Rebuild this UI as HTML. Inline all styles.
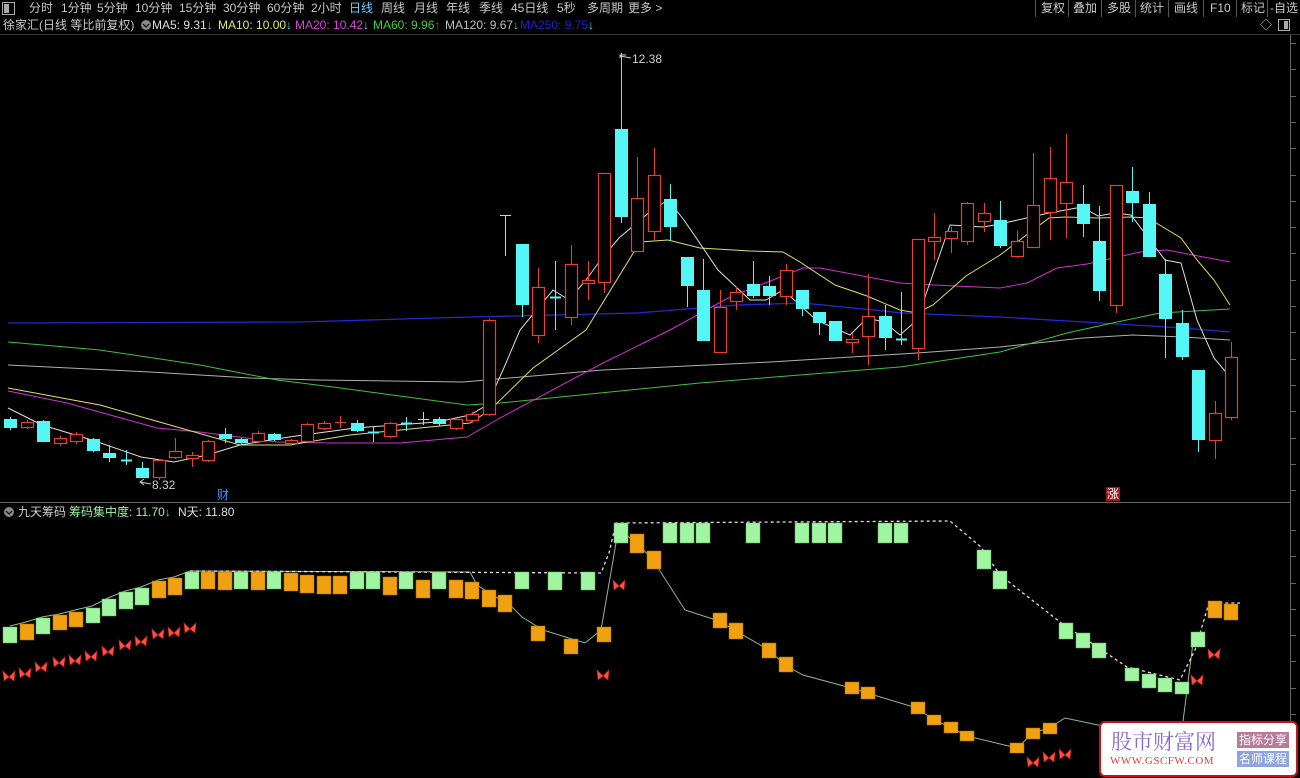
<!DOCTYPE html>
<html><head><meta charset="utf-8">
<style>
body{margin:0;background:#000;width:1300px;height:778px;overflow:hidden;position:relative;font-family:"Liberation Sans","Noto Sans CJK SC",sans-serif;font-size:12px;color:#c8c8c8}
.t{position:absolute;white-space:nowrap;line-height:17px}
svg{position:absolute;left:0;top:0}
</style></head><body>
<svg id="s" width="1300" height="778" viewBox="0 0 1300 778"></svg>

<div class="t" style="left:2px;top:0;width:13px;height:13px;top:2px;border:1px solid #aaa;box-sizing:border-box;line-height:10px"><div style="width:5px;height:9px;background:#aaa;margin:1px"></div></div>
<div class="t" style="left:29px;top:0">分时</div>
<div class="t" style="left:61px;top:0">1分钟</div>
<div class="t" style="left:97px;top:0">5分钟</div>
<div class="t" style="left:135px;top:0">10分钟</div>
<div class="t" style="left:179px;top:0">15分钟</div>
<div class="t" style="left:223px;top:0">30分钟</div>
<div class="t" style="left:267px;top:0">60分钟</div>
<div class="t" style="left:311px;top:0">2小时</div>
<div class="t" style="left:349px;top:0;color:#6ad0ff">日线</div>
<div class="t" style="left:381px;top:0">周线</div>
<div class="t" style="left:414px;top:0">月线</div>
<div class="t" style="left:446px;top:0">年线</div>
<div class="t" style="left:479px;top:0">季线</div>
<div class="t" style="left:511px;top:0">45日线</div>
<div class="t" style="left:557px;top:0">5秒</div>
<div class="t" style="left:587px;top:0">多周期</div>
<div class="t" style="left:628px;top:0">更多 &gt;</div>

<div class="t" style="left:1041px;top:0">复权</div>
<div class="t" style="left:1073px;top:0">叠加</div>
<div class="t" style="left:1107px;top:0">多股</div>
<div class="t" style="left:1140px;top:0">统计</div>
<div class="t" style="left:1174px;top:0">画线</div>
<div class="t" style="left:1210px;top:0">F10</div>
<div class="t" style="left:1241px;top:0">标记</div>
<div class="t" style="left:1270px;top:0">-自选</div>

<div class="t" style="left:3px;top:17px">徐家汇(日线 等比前复权)</div>
<div class="t" style="left:152px;top:17px;color:#e0e0e0">MA5: 9.31<span style="color:#40e0f0">↓</span></div>
<div class="t" style="left:218px;top:17px;color:#e8e860">MA10: 10.00<span style="color:#40e0f0">↓</span></div>
<div class="t" style="left:295px;top:17px;color:#e040e0">MA20: 10.42<span style="color:#40e0f0">↓</span></div>
<div class="t" style="left:373px;top:17px;color:#40d040">MA60: 9.96<span style="color:#ff3030">↑</span></div>
<div class="t" style="left:445px;top:17px;color:#c0c0c0">MA120: 9.67<span style="color:#40e0f0">↓</span></div>
<div class="t" style="left:520px;top:17px;color:#2020c8">MA250: 9.75<span style="color:#40e0f0">↓</span></div>
<div class="t" style="left:1260px;top:17px;color:#ccc">◇</div>

<div class="t" style="left:632px;top:51px;color:#d0d0d0">12.38</div>
<div class="t" style="left:152px;top:477px;color:#d0d0d0">8.32</div>
<div class="t" style="left:217px;top:487px;color:#4a8cff">财</div>
<div class="t" style="left:1106px;top:487px;color:#fff;background:#a01818;line-height:14px;padding:0 1px">涨</div>

<div class="t" style="left:18px;top:504px;color:#d0d0d0">九天筹码</div>
<div class="t" style="left:69px;top:504px;color:#9ff59f">筹码集中度: 11.70<span style="color:#40e0f0">↓</span></div>
<div class="t" style="left:178px;top:504px;color:#e0e0e0">N天: 11.80</div>

<div style="position:absolute;left:1099px;top:721px;width:195px;height:52px;background:#fff;border:2px solid #d01010;border-radius:6px"></div>
<div class="t" style="left:1111px;top:729px;font-size:21px;line-height:24px;color:#8a6ad0;font-family:'Noto Serif CJK SC',serif">股市财富网</div>
<div class="t" style="left:1110px;top:755px;font-size:11px;line-height:13px;color:#e04040;font-family:'Liberation Serif',serif;letter-spacing:0.5px">WWW.GSCFW.COM</div>
<div class="t" style="left:1237px;top:732px;width:52px;height:16px;line-height:16px;background:#b77a9a;color:#fff;font-size:12px;text-align:center">指标分享</div>
<div class="t" style="left:1237px;top:751px;width:52px;height:16px;line-height:16px;background:#8fa3e0;color:#fff;font-size:12px;text-align:center">名师课程</div>

<script>
var s=document.getElementById('s'),h='';
function X(i){return 10+16.5*i}
function L(x1,y1,x2,y2,c,w,d){h+='<line x1="'+x1+'" y1="'+y1+'" x2="'+x2+'" y2="'+y2+'" stroke="'+c+'" stroke-width="'+(w||1)+'"'+(d?' stroke-dasharray="'+d+'"':'')+'/>'}
function P(pts,c,w,d){h+='<polyline fill="none" points="'+pts+'" stroke="'+c+'" stroke-width="'+(w||1)+'"'+(d?' stroke-dasharray="'+d+'"':'')+'/>'}
var sep=[1035,1068,1101,1135,1168,1203,1236,1267];
sep.forEach(function(x){L(x+.5,0,x+.5,17,'#555')});
L(0,34.5,1300,34.5,'#333');
L(0,502.5,1290,502.5,'#666');
L(1290.5,35,1290.5,778,'#666');
for(var y=43;y<500;y+=26.3)L(1291,Math.round(y)+.5,1296,Math.round(y)+.5,'#666');
for(var y=530;y<778;y+=26.3)L(1291,Math.round(y)+.5,1296,Math.round(y)+.5,'#666');
h+='<rect x="1278.5" y="19.5" width="11" height="11" fill="none" stroke="#aaa"/><rect x="1284" y="21" width="4" height="8" fill="#aaa"/>';
h+='<circle cx="146" cy="25" r="5" fill="#888"/><path d="M143 24 L146 27 L149 24" stroke="#000" fill="none"/>';
h+='<circle cx="9" cy="512" r="5" fill="#888"/><path d="M6 511 L9 514 L12 511" stroke="#000" fill="none"/>';
P('8,323 300,322 470,317 637,313 737,305 803,303 903,313 1000,317 1100,323 1183,328 1230,332','#2828d0',1.3);
P('8,365 150,372 250,378 317,380 463,382 603,370 770,362 917,353 1000,347 1083,338 1133,335 1183,337 1230,340','#b0b0b0');
P('8,342 100,350 200,365 277,380 333,387 467,405 500,403 600,393 700,383 800,375 900,367 1000,352 1067,333 1117,322 1160,313 1230,309','#40c040');
P('8,391 67,403 157,428 200,432 277,442 333,443 400,443 467,437 500,418 603,363 670,330 730,297 803,268 820,268 900,283 933,285 1000,288 1027,283 1057,268 1087,264 1140,252 1167,250 1193,255 1230,262','#d030d0');
P('8,388 100,405 170,425 240,445 290,445 350,435 420,428 470,423 490,410 533,368 586,330 640,242 668,240 700,248 750,251 783,252 800,262 835,285 867,296 900,310 917,313 933,305 966,276 1000,255 1049,218 1065,217 1098,218 1131,217 1148,218 1181,238 1197,260 1214,280 1230,305','#e0e060');
P('8,408 42,425 92,440 141,457 174,462 207,455 240,445 289,437 355,428 437,422 470,415 487,405 503,370 520,330 553,290 569,300 586,280 602,258 619,238 652,210 668,200 684,220 718,270 750,300 766,300 783,290 800,305 816,320 850,335 867,318 884,322 900,335 917,320 950,225 983,227 1000,224 1049,213 1082,207 1098,216 1115,213 1131,215 1165,260 1181,263 1197,320 1214,358 1230,377','#e0e0e0');
var C=[['c',419,428,417,430],['r',422,428,420,429],['c',421,442,420,442],['r',438,444,436,446],['r',434,442,432,444],['c',439,451,438,452],['c',453,458,445,462],['c',460,462,450,465],['c',468,478,462,478],['r',460,478,459,480],['r',451,458,438,459],['r',455,459,452,467],['r',441,461,440,462],['c',434,439,428,443],['c',439,443,438,445],['r',433,442,431,443],['c',434,440,433,441],['r',440,444,439,446],['r',424,442,423,443],['r',423,429,421,430],['r',422,424,416,428],['c',423,431,420,432],['c',432,433,427,442],['r',423,437,422,438],['c',423,424,417,431],['w',419,420,412,425],['c',419,424,417,426],['r',419,429,418,430],['r',414,421,412,423],['r',320,415,319,416],['w',215,216,215,256],['c',244,305,244,317],['r',287,336,268,343],['c',297,299,261,330],['r',264,318,245,325],['r',280,284,261,300],['r',173,283,173,293],['c',129,217,53,223],['r',198,252,157,252],['r',175,232,148,240],['c',199,227,184,241],['c',257,286,257,307],['c',290,341,259,341],['r',307,353,290,353],['r',292,302,287,310],['c',284,296,261,298],['c',286,296,276,305],['r',270,297,264,305],['c',290,309,290,316],['c',312,323,312,335],['c',321,341,321,341],['r',339,343,333,353],['r',316,337,274,365],['c',316,338,305,350],['c',339,341,292,345],['r',239,349,239,360],['r',237,242,213,260],['r',231,239,227,253],['r',203,242,202,245],['r',213,222,203,232],['c',220,246,201,248],['r',241,257,231,258],['r',205,248,153,248],['r',178,213,147,240],['r',182,204,134,238],['c',204,224,185,237],['c',241,291,206,301],['r',185,306,185,313],['c',191,203,167,222],['c',204,257,192,257],['c',274,319,259,358],['c',323,357,310,360],['c',370,440,370,452],['r',413,441,401,459],['r',357,418,342,420]];
C.forEach(function(c,i){var x=Math.round(X(i));var col=c[0]=='r'?'#e8402c':(c[0]=='c'?'#54f6f6':'#d0d0d0');
 L(x+.5,c[3],x+.5,c[4],col);
 if(c[0]=='w'&&i==30){L(x-5,215.5,x+6,215.5,col);return}
 var hgt=c[2]-c[1];
 if(hgt<=2){L(x-5,c[1]+.5,x+6,c[1]+.5,col,c[0]=='c'?2:1);return}
 if(c[0]=='r')h+='<rect x="'+(x-5.5)+'" y="'+(c[1]+.5)+'" width="12" height="'+(hgt-1)+'" fill="#000" stroke="'+col+'" stroke-width="1.2"/>';
 else h+='<rect x="'+(x-6)+'" y="'+c[1]+'" width="13" height="'+hgt+'" fill="'+col+'"/>';
});
P('626,55 620,55 620,58','#d0d0d0');L(620,56,631,58,'#d0d0d0');
L(140,482,151,484,'#d0d0d0');P('144,479 140,482 144,485','#d0d0d0');
P('10,626 26,622 42,617 59,614 75,610 92,606 108,598 125,591 141,587 158,580 174,577 190,571 470,572 477,585 512,607 522,617 543,630 585,643 601,630 616,543 619,530 637,543 653,560 685,610 719,621 736,631 769,650 785,665 803,675 851,688 867,693 917,708 934,720 950,727 967,736 1017,748 1033,733 1049,728 1065,718 1098,725 1180,745 1193,643','#90b890');
P('190,571 601,573 609,553 616,523 950,521 981,547 1000,575 1060,622 1127,667 1180,680 1195,650 1209,603 1240,603','#e0e0e0',1.3,'3,3');
var B=[['g',627,643],['o',624,640],['g',618,634],['o',615,630],['o',612,627],['g',608,623],['g',599,616],['g',592,609],['g',588,605],['o',581,598],['o',578,595],['g',572,589],['o',572,589],['o',572,590],['g',572,589],['o',572,590],['g',572,589],['o',573,591],['o',575,593],['o',576,594],['o',576,594],['g',572,589],['g',572,589],['o',577,595],['g',572,589],['o',580,598],['g',572,589],['o',580,598],['o',582,599],['o',590,607],['o',595,612],['g',572,589],['o',626,641],['g',572,590],['o',639,654],['g',572,590],['o',627,642],['g',523,543],['o',534,553],['o',551,569],['g',523,543],['g',523,543],['g',523,543],['o',613,628],['o',623,639],['g',523,543],['o',643,658],['o',657,672],['g',523,543],['g',523,543],['g',523,543],['o',682,694],['o',687,699],['g',523,543],['g',523,543],['o',702,714],['o',715,725],['o',722,733],['o',731,741],['g',550,569],['g',571,589],['o',743,753],['o',728,739],['o',723,734],['g',623,639],['g',633,648],['g',643,658],null,['g',668,681],['g',674,688],['g',678,692],['g',682,694],['g',632,647],['o',601,618],['o',604,620]];
B.forEach(function(b,i){if(!b)return;var x=Math.round(X(i));h+='<rect x="'+(x-7)+'" y="'+b[1]+'" width="14" height="'+(b[2]-b[1])+'" fill="'+(b[0]=='g'?'#a0f5a0':'#f0a010')+'" stroke="'+(b[0]=='g'?'#70b070':'#b07000')+'" stroke-width="0.5"/>';});
var F=[[9,676],[25,673],[41,667],[59,662],[75,660],[91,656],[108,651],[125,645],[141,641],[158,634],[174,632],[190,628],[619,585],[603,675],[1214,654],[1197,680],[1033,762],[1049,757],[1065,754]];
F.forEach(function(f){var x=f[0],y=f[1];h+='<path d="M'+x+' '+(y+1)+' L'+(x-6)+' '+(y-5)+' L'+(x-5)+' '+(y+5)+' Z M'+x+' '+(y+1)+' L'+(x+6)+' '+(y-5)+' L'+(x+5)+' '+(y+5)+' Z" fill="#ff5040" stroke="#c02020" stroke-width="0.7"/>';});
s.innerHTML=h;
</script>
</body></html>
